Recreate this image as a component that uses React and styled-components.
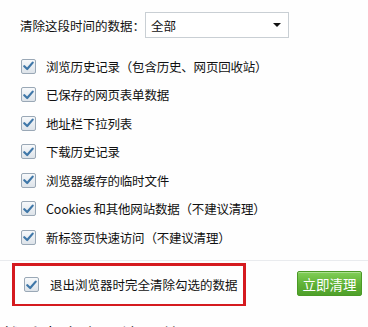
import React from "react";
import styled, { createGlobalStyle } from "styled-components";

const Global = createGlobalStyle`
  html, body { margin: 0; padding: 0; background: #fefefe; overflow: hidden; }
  body { font-family: "Noto Sans CJK SC", "Noto Sans", sans-serif; color: #111; }
`;

const Page = styled.div`
  width: 368px;
  height: 327px;
  overflow: hidden;
  background: #fefefe;
`;

const Header = styled.div`
  display: flex;
  align-items: center;
  padding: 12px 0 0 20px;
  font-size: 12.5px;
`;

const Label = styled.span`
  width: 125px;
  white-space: nowrap;
`;

const Select = styled.div`
  box-sizing: border-box;
  width: 144px;
  height: 26px;
  border: 1px solid #c9cfd4;
  background: #fff;
  display: flex;
  align-items: center;
  justify-content: space-between;
  padding: 0 4px 0 5px;
  font-size: 12.5px;
`;

const Arrow = styled.span`
  width: 0;
  height: 0;
  border-left: 4px solid transparent;
  border-right: 4px solid transparent;
  border-top: 4px solid #111;
  margin-right: 3px;
`;

const List = styled.div`
  margin-top: 14px;
  padding-left: 21px;
`;

const Row = styled.div`
  display: flex;
  align-items: center;
  height: 28.5px;
  font-size: 12.5px;
  letter-spacing: -0.2px;
  white-space: nowrap;
`;

const Box = styled.span`
  box-sizing: border-box;
  width: 15px;
  height: 15px;
  border: 1px solid #9aa8b6;
  border-radius: 2px;
  background: linear-gradient(#f7f9fb, #dde3e9);
  display: inline-flex;
  align-items: center;
  justify-content: center;
  margin-right: ${(p) => p.$gap || 10}px;
  flex: none;
`;

const Divider = styled.div`
  height: 1px;
  background: #e9ebee;
  margin-top: 8px;
`;

const Footer = styled.div`
  display: flex;
  align-items: center;
  margin-top: 2px;
  padding-left: 12px;
`;

const Highlight = styled.div`
  box-sizing: border-box;
  width: 234px;
  height: 43px;
  border: 3px solid #d51a1f;
  border-bottom-width: 2px;
  display: flex;
  align-items: center;
  padding-left: 9px;
  font-size: 12.5px;
  white-space: nowrap;
`;

const CleanButton = styled.button`
  box-sizing: border-box;
  margin-left: 51px;
  margin-top: -1px;
  width: 65px;
  height: 25px;
  border: 1px solid #4b9a26;
  border-radius: 2px;
  background: linear-gradient(#82cf58, #5fb136 55%, #4fa02a);
  color: #fff;
  font-family: "Noto Sans CJK SC", sans-serif;
  font-size: 13.5px;
  padding: 0;
  box-shadow: inset 0 1px 0 rgba(255,255,255,0.35);
`;

const Caption = styled.div`
  margin-top: 19px;
  padding-left: 2px;
  font-size: 17px;
  line-height: 17px;
  letter-spacing: 3px;
  color: #111;
  white-space: nowrap;
`;

const Check = () => (
  <svg width="11" height="10" viewBox="0 0 11 10">
    <path d="M1.3 5.2 L4.2 8 L9.7 1.6" fill="none" stroke="#3f77a8" strokeWidth="2.2" strokeLinecap="round" strokeLinejoin="round" />
  </svg>
);

const Checkbox = ({ gap }) => (
  <Box $gap={gap}>
    <Check />
  </Box>
);

const items = [
  "浏览历史记录（包含历史、网页回收站）",
  "已保存的网页表单数据",
  "地址栏下拉列表",
  "下载历史记录",
  "浏览器缓存的临时文件",
  "Cookies 和其他网站数据（不建议清理）",
  "新标签页快速访问（不建议清理）",
];

export default function App() {
  return (
    <Page>
      <Global />
      <Header>
        <Label>清除这段时间的数据：</Label>
        <Select>
          <span>全部</span>
          <Arrow />
        </Select>
      </Header>
      <List>
        {items.map((t) => (
          <Row key={t}>
            <Checkbox />
            <span>{t}</span>
          </Row>
        ))}
      </List>
      <Divider />
      <Footer>
        <Highlight>
          <Checkbox gap={11} />
          <span>退出浏览器时完全清除勾选的数据</span>
        </Highlight>
        <CleanButton>立即清理</CleanButton>
      </Footer>
      <Caption>然后点击立即清理就可以了</Caption>
    </Page>
  );
}
